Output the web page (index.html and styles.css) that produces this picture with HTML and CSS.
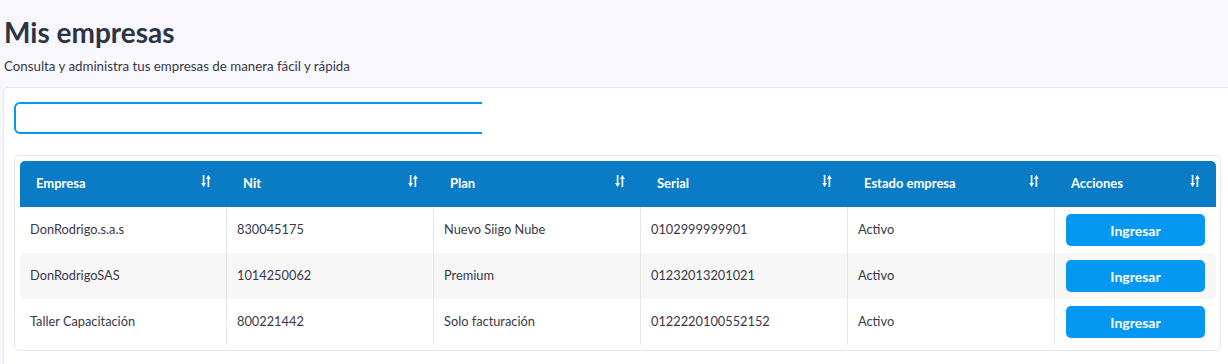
FILE: index.html
```html
<!DOCTYPE html>
<html lang="es">
<head>
    <meta charset="UTF-8">
    <title>Mis empresas</title>
    <link rel="stylesheet" href="styles.css">
</head>
<body>

<div class="page-header">
    <h1>Mis empresas</h1>
    <p>Consulta y administra tus empresas de manera fácil y rápida</p>
</div>

<div class="card">
    <div class="search-box">
        <input type="text" id="search" autofocus>
    </div>

    <div class="table-card">
        <table>
            <thead>
                <tr>
                    <th><span>Empresa</span><svg class="sort" viewBox="0 0 10 12"><path d="M1.8 0h1.6v8h1.6L2.6 12 0.2 8h1.6z M6.6 12h1.6V4h1.6L7.4 0 5 4h1.6z" /></svg></th>
                    <th><span>Nit</span><svg class="sort" viewBox="0 0 10 12"><path d="M1.8 0h1.6v8h1.6L2.6 12 0.2 8h1.6z M6.6 12h1.6V4h1.6L7.4 0 5 4h1.6z" /></svg></th>
                    <th><span>Plan</span><svg class="sort" viewBox="0 0 10 12"><path d="M1.8 0h1.6v8h1.6L2.6 12 0.2 8h1.6z M6.6 12h1.6V4h1.6L7.4 0 5 4h1.6z" /></svg></th>
                    <th><span>Serial</span><svg class="sort" viewBox="0 0 10 12"><path d="M1.8 0h1.6v8h1.6L2.6 12 0.2 8h1.6z M6.6 12h1.6V4h1.6L7.4 0 5 4h1.6z" /></svg></th>
                    <th><span>Estado empresa</span><svg class="sort" viewBox="0 0 10 12"><path d="M1.8 0h1.6v8h1.6L2.6 12 0.2 8h1.6z M6.6 12h1.6V4h1.6L7.4 0 5 4h1.6z" /></svg></th>
                    <th><span>Acciones</span><svg class="sort" viewBox="0 0 10 12"><path d="M1.8 0h1.6v8h1.6L2.6 12 0.2 8h1.6z M6.6 12h1.6V4h1.6L7.4 0 5 4h1.6z" /></svg></th>
                </tr>
            </thead>
            <tbody>
                <tr>
                    <td>DonRodrigo.s.a.s</td>
                    <td>830045175</td>
                    <td>Nuevo Siigo Nube</td>
                    <td>0102999999901</td>
                    <td>Activo</td>
                    <td><button type="button">Ingresar</button></td>
                </tr>
                <tr>
                    <td>DonRodrigoSAS</td>
                    <td>1014250062</td>
                    <td>Premium</td>
                    <td>01232013201021</td>
                    <td>Activo</td>
                    <td><button type="button">Ingresar</button></td>
                </tr>
                <tr>
                    <td>Taller Capacitación</td>
                    <td>800221442</td>
                    <td>Solo facturación</td>
                    <td>0122220100552152</td>
                    <td>Activo</td>
                    <td><button type="button">Ingresar</button></td>
                </tr>
            </tbody>
        </table>
    </div>
</div>

</body>
</html>
```

FILE: styles.css
```css
body {
    font-family: Lato, "Noto Sans", sans-serif;
    background-color: #f7f7fc;
    margin: 0;
    padding: 0;
    overflow: hidden;
    color: #3a3848;
}
.page-header {
    padding: 15px 4px 0 4px;
    height: 87px;
    box-sizing: border-box;
}
h1 {
    margin: 0;
    font-size: 28px;
    font-weight: bold;
    color: #2e3446;
    line-height: 34px;
}
.page-header p {
    margin: 9px 0 0 0;
    font-size: 13.3px;
    line-height: 16px;
}
.card {
    background-color: #ffffff;
    margin-left: 3px;
    width: 1260px;
    height: 277px;
    border: 1px solid #e6e6ec;
    border-bottom: none;
    border-radius: 5px 0 0 0;
    padding: 14px 0 0 10px;
    box-sizing: border-box;
}
.search-box {
    width: 468px;
    overflow: hidden;
    margin-bottom: 21px;
}
.search-box input {
    display: block;
    width: 490px;
    height: 32px;
    border: 2px solid #0598f2;
    border-radius: 6px;
    box-sizing: border-box;
    padding: 0 14px;
    font-family: inherit;
    font-size: 14px;
    outline: none;
    caret-color: #0a7cc6;
}
.table-card {
    width: 1207px;
    box-sizing: border-box;
    border: 1px solid #e8e8ec;
    border-radius: 5px;
    padding: 5px;
}
table {
    width: 100%;
    border-collapse: separate;
    border-spacing: 0;
    table-layout: fixed;
}
th {
    background-color: #0a7cc6;
    color: #ffffff;
    height: 46px;
    padding: 0 16px 3px 16px;
    text-align: left;
    font-size: 13px;
    font-weight: bold;
    width: 207px;
    box-sizing: border-box;
}
th:last-child {
    width: 161px;
}
th:first-child {
    border-top-left-radius: 5px;
}
th:last-child {
    border-top-right-radius: 5px;
}
th span {
    display: inline-block;
    vertical-align: middle;
}
.sort {
    float: right;
    width: 10px;
    height: 12px;
    margin-top: 1px;
    fill: #ffffff;
}
td {
    height: 46px;
    padding: 0 10px 2px 10px;
    font-size: 12.8px;
    border-right: 1px solid #e6e6e6;
    box-sizing: border-box;
}
td:last-child {
    border-right: none;
    padding: 0 10px 0 11px;
}
tbody tr:nth-child(2) td {
    background-color: #f7f7f7;
}
tbody tr:nth-child(2) td:first-child {
    border-radius: 6px 0 0 6px;
}
tbody tr:nth-child(2) td:last-child {
    border-radius: 0 6px 6px 0;
}
button {
    display: block;
    width: 139px;
    height: 32px;
    background-color: #0598f2;
    color: white;
    border: none;
    border-radius: 5px;
    font-family: inherit;
    font-size: 14px;
    font-weight: bold;
    cursor: pointer;
}
button:hover {
    background-color: #0488da;
}
```
